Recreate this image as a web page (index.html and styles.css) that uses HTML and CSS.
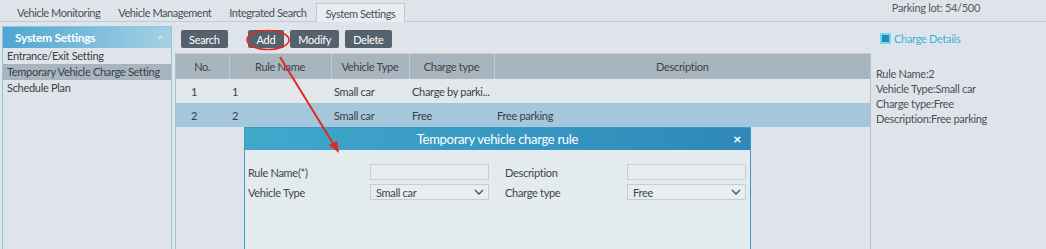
FILE: index.html
```html
<!DOCTYPE html>
<html lang="en">
<head>
    <meta charset="UTF-8">
    <meta name="viewport" content="width=device-width, initial-scale=1.0">
    <title>System Settings</title>
    <link rel="stylesheet" href="styles.css">
</head>
<body>
    <div class="topbar">
        <div class="tabs">
            <div class="tab">Vehicle Monitoring</div>
            <div class="tab">Vehicle Management</div>
            <div class="tab">Integrated Search</div>
            <div class="tab active">System Settings</div>
        </div>
        <div class="parking">Parking lot: 54/500</div>
    </div>

    <div class="page">
        <div class="sidebar">
            <div class="sidebar-head">
                <span>System Settings</span>
                <span class="caret">&#94;</span>
            </div>
            <div class="menu-item">Entrance/Exit Setting</div>
            <div class="menu-item selected">Temporary Vehicle Charge Setting</div>
            <div class="menu-item">Schedule Plan</div>
        </div>

        <div class="main">
            <div class="toolbar">
                <button class="btn">Search</button>
                <button class="btn btn-add">Add</button>
                <button class="btn">Modify</button>
                <button class="btn">Delete</button>
            </div>
            <div class="grid">
                <table>
                    <colgroup>
                        <col class="c-no">
                        <col class="c-name">
                        <col class="c-vtype">
                        <col class="c-ctype">
                        <col>
                    </colgroup>
                    <thead>
                        <tr>
                            <th>No.</th>
                            <th>Rule Name</th>
                            <th>Vehicle Type</th>
                            <th>Charge type</th>
                            <th>Description</th>
                        </tr>
                    </thead>
                    <tbody>
                        <tr>
                            <td class="num">1</td>
                            <td>1</td>
                            <td>Small car</td>
                            <td>Charge by parki...</td>
                            <td></td>
                        </tr>
                        <tr class="picked">
                            <td class="num">2</td>
                            <td>2</td>
                            <td>Small car</td>
                            <td>Free</td>
                            <td>Free parking</td>
                        </tr>
                    </tbody>
                </table>
            </div>
        </div>

        <div class="details">
            <div class="details-title">
                <span class="box"></span>Charge Details
            </div>
            <div class="details-body">
                <div>Rule Name:2</div>
                <div>Vehicle Type:Small car</div>
                <div>Charge type:Free</div>
                <div>Description:Free parking</div>
            </div>
        </div>
    </div>

    <div class="dialog">
        <div class="dialog-head">
            <span>Temporary vehicle charge rule</span>
            <span class="close">&#215;</span>
        </div>
        <div class="dialog-body">
            <div class="form-row">
                <label>Rule Name(*)</label>
                <div class="field"></div>
                <label>Description</label>
                <div class="field"></div>
            </div>
            <div class="form-row">
                <label>Vehicle Type</label>
                <div class="field select">Small car
                    <svg class="chev" width="10" height="6" viewBox="0 0 10 6"><path d="M1 1 L5 5 L9 1" fill="none" stroke="#4a4f55" stroke-width="1.3"/></svg>
                </div>
                <label>Charge type</label>
                <div class="field select">Free
                    <svg class="chev" width="10" height="6" viewBox="0 0 10 6"><path d="M1 1 L5 5 L9 1" fill="none" stroke="#4a4f55" stroke-width="1.3"/></svg>
                </div>
            </div>
        </div>
    </div>

    <svg class="marks" width="1046" height="249" viewBox="0 0 1046 249">
        <ellipse cx="268" cy="40" rx="21" ry="9.5" fill="none" stroke="#e02a22" stroke-width="1.6"/>
        <line x1="280" y1="57" x2="334" y2="145" stroke="#e02a22" stroke-width="2"/>
        <polygon points="339,153 329,145 337,141" fill="#e02a22"/>
    </svg>
</body>
</html>
```

FILE: styles.css
```css
body {
    margin: 0;
    width: 1046px;
    height: 249px;
    overflow: hidden;
    position: relative;
    background-color: #dfe4ea;
    font-family: Lato, "Open Sans", Arial, sans-serif;
    font-size: 11px;
    letter-spacing: -0.3px;
    color: #3a3f44;
}
.topbar {
    height: 21px;
    display: flex;
    justify-content: space-between;
    border-bottom: 1px solid #c3cbd2;
}
.tabs {
    display: flex;
    padding-left: 8px;
    padding-top: 3px;
}
.tab {
    padding: 2px 9px 0 9px;
    line-height: 16px;
    letter-spacing: -0.45px;
    color: #4a5056;
}
.tab.active {
    background: #e9edf1;
    border: 1px solid #c3cbd2;
    border-bottom: none;
    margin-bottom: -1px;
    padding-bottom: 1px;
}
.parking {
    padding: 1px 66px 0 0;
    color: #555b61;
}
.page {
    display: flex;
    height: 227px;
}
.sidebar {
    width: 168px;
    margin: 4px 0 0 2px;
    border: 1px solid #8cc7e0;
    border-bottom: none;
}
.sidebar-head {
    height: 21px;
    display: flex;
    justify-content: space-between;
    align-items: center;
    padding: 0 8px 0 12px;
    background: linear-gradient(to right, #4ea6d0, #a6d1e5);
    color: #ffffff;
    font-size: 12px;
    font-weight: 700;
}
.caret {
    font-size: 10px;
    font-weight: 400;
    color: #e9f3f8;
}
.menu-item {
    height: 16px;
    line-height: 16px;
    padding-left: 4px;
    color: #3a3f44;
}
.menu-item.selected {
    background: #a8b4bf;
}
.main {
    width: 696px;
    margin-left: 3px;
    display: flex;
    flex-direction: column;
}
.toolbar {
    height: 31px;
    display: flex;
    align-items: flex-start;
    padding: 8px 0 0 6px;
    box-sizing: border-box;
}
.btn {
    height: 18px;
    padding: 0 8px;
    margin-right: 6px;
    border: none;
    border-radius: 2px;
    background: #55626e;
    color: #ffffff;
    font-family: inherit;
    font-size: 11px;
    letter-spacing: -0.3px;
}
.btn-add {
    margin-left: 14px;
    padding: 0 9px;
}
.grid {
    flex: 1;
    border-left: 1px solid #b5bec6;
    border-right: 1px solid #b5bec6;
}
table {
    width: 100%;
    border-collapse: collapse;
    table-layout: fixed;
}
.c-no { width: 53px; }
.c-name { width: 102px; }
.c-vtype { width: 78px; }
.c-ctype { width: 85px; }
th {
    height: 25px;
    padding: 0;
    background: #a8b5be;
    border-top: 1px solid #c5ced5;
    border-left: 1px solid #c3ccd3;
    font-weight: 400;
    color: #3c4247;
}
th:first-child {
    border-left: none;
}
td {
    height: 24px;
    padding: 0 0 0 3px;
    white-space: nowrap;
    overflow: hidden;
    background: #e2e7ec;
}
td.num {
    padding-left: 15px;
}
tr.picked td {
    background: #a4c7dc;
}
.details {
    flex: 1;
    padding: 10px 0 0 5px;
}
.details-title {
    display: flex;
    align-items: center;
    margin-left: 4px;
    color: #3db2d8;
}
.box {
    width: 7px;
    height: 7px;
    margin-right: 3px;
    background: #2f86b5;
    border: 2px solid #5fe0ef;
}
.details-body {
    margin-top: 21px;
    line-height: 15px;
    color: #4a5056;
}
.dialog {
    position: absolute;
    left: 244px;
    top: 127px;
    width: 505px;
    height: 140px;
    border: 1px solid #3b9bc6;
    background: #e3ebef;
}
.dialog-head {
    height: 22px;
    display: flex;
    justify-content: center;
    align-items: center;
    position: relative;
    background: linear-gradient(to right, #41a8cc, #2f88b8);
    color: #ffffff;
    font-size: 13px;
}
.close {
    position: absolute;
    right: 9px;
    top: 2px;
    font-size: 14px;
    font-weight: 700;
}
.dialog-body {
    padding: 12px 4px 0 3px;
}
.form-row {
    display: grid;
    grid-template-columns: 122px 119px 138px 119px;
    align-items: center;
    height: 20px;
}
.form-row label {
    color: #3f454a;
}
.form-row label:nth-of-type(2) {
    padding-left: 16px;
}
.field {
    height: 14px;
    border: 1px solid #c5cdd2;
    background: #e7edf0;
}
.select {
    display: flex;
    justify-content: space-between;
    align-items: center;
    padding-left: 5px;
    padding-right: 4px;
    color: #3f454a;
}
.chev {
    display: block;
}
.marks {
    position: absolute;
    left: 0;
    top: 0;
    pointer-events: none;
}
```
